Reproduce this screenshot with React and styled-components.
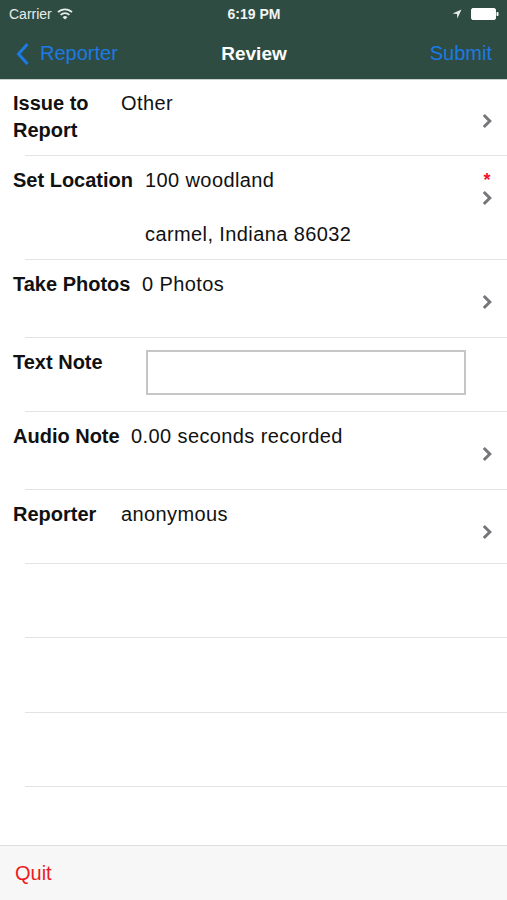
import React from 'react'
import styled, { createGlobalStyle } from 'styled-components'

const GlobalStyle = createGlobalStyle`
  html, body {
    margin: 0;
    padding: 0;
    background: #fff;
    font-family: "Liberation Sans", Arial, sans-serif;
  }
`

const rows = [
  { label: 'Issue to\nReport', value: ['Other'], labelWidth: 97, height: 76, chevron: true },
  { label: 'Set Location', value: ['100 woodland', 'carmel, Indiana 86032'], labelWidth: 121, height: 104, chevron: true, required: true },
  { label: 'Take Photos', value: ['0 Photos'], labelWidth: 118, height: 78, chevron: true },
  { label: 'Text Note', input: true, labelWidth: 122, height: 74 },
  { label: 'Audio Note', value: ['0.00 seconds recorded'], labelWidth: 107, height: 78, chevron: true },
  { label: 'Reporter', value: ['anonymous'], labelWidth: 97, height: 74, chevron: true },
]

const Chevron = () => (
  <svg width="12" height="16" viewBox="0 0 12 16">
    <path d="M2.8 2 L8.8 8 L2.8 14" fill="none" stroke="#76767a" strokeWidth="3" />
  </svg>
)

const BackChevron = () => (
  <svg width="14" height="24" viewBox="0 0 14 24">
    <path d="M11.5 2 L2.5 12 L11.5 22" fill="none" stroke="#1c7ae2" strokeWidth="3" />
  </svg>
)

const Wifi = () => (
  <svg width="16" height="12" viewBox="0 0 16 12">
    <path d="M1 4.2 A10 10 0 0 1 15 4.2" fill="none" stroke="#e6ece9" strokeWidth="1.8" />
    <path d="M3.6 6.8 A6.4 6.4 0 0 1 12.4 6.8" fill="none" stroke="#e6ece9" strokeWidth="1.8" />
    <path d="M8 11.5 L5.6 9.2 A3.4 3.4 0 0 1 10.4 9.2 Z" fill="#e6ece9" />
  </svg>
)

const LocationArrow = () => (
  <svg width="10" height="10" viewBox="0 0 10 10">
    <path d="M9.5 0.5 L0.5 4.6 L5 5 L5.4 9.5 Z" fill="#e6ece9" />
  </svg>
)

const Battery = () => (
  <svg width="28" height="12" viewBox="0 0 28 12">
    <rect x="0.5" y="0.5" width="24" height="11" rx="1.5" fill="#fff" stroke="#fff" />
    <rect x="25.5" y="4" width="2" height="4" rx="0.8" fill="#fff" />
  </svg>
)

export default function App() {
  return (
    <>
      <GlobalStyle />
      <Screen>
        <Header>
          <StatusBar>
            <Carrier>
              Carrier <Wifi />
            </Carrier>
            <Clock>6:19 PM</Clock>
            <StatusRight>
              <LocationArrow />
              <Battery />
            </StatusRight>
          </StatusBar>
          <NavBar>
            <NavButton>
              <BackChevron />
              Reporter
            </NavButton>
            <NavTitle>Review</NavTitle>
            <NavButton $right>Submit</NavButton>
          </NavBar>
        </Header>

        <List>
          {rows.map(row => (
            <Row key={row.label} $height={row.height}>
              <Label $width={row.labelWidth}>{row.label}</Label>
              {row.input ? (
                <NoteInput />
              ) : (
                <Value>
                  {row.value.map(line => (
                    <div key={line}>{line}</div>
                  ))}
                </Value>
              )}
              <Accessory>
                {row.required && <Required>*</Required>}
                {row.chevron && (
                  <ChevronSlot>
                    <Chevron />
                  </ChevronSlot>
                )}
              </Accessory>
            </Row>
          ))}
          <Row $height={74} />
          <Row $height={75} />
          <Row $height={74} />
        </List>

        <Toolbar>
          <QuitButton>Quit</QuitButton>
        </Toolbar>
      </Screen>
    </>
  )
}

const Screen = styled.div`
  width: 507px;
  height: 900px;
  display: flex;
  flex-direction: column;
  background: #fff;
  overflow: hidden;
`

const Header = styled.div`
  background: #2e4c42;
  height: 79px;
  border-bottom: 1px solid #c9cfcc;
  display: flex;
  flex-direction: column;
`

const StatusBar = styled.div`
  height: 27px;
  display: grid;
  grid-template-columns: 1fr auto 1fr;
  align-items: center;
  padding: 0 8px 0 9px;
  font-size: 14px;
  color: #e6ece9;
`

const Carrier = styled.div`
  display: flex;
  align-items: center;
  gap: 5px;
`

const Clock = styled.div`
  font-weight: bold;
  color: #f2f4f3;
`

const StatusRight = styled.div`
  display: flex;
  align-items: center;
  justify-content: flex-end;
  gap: 9px;
`

const NavBar = styled.div`
  flex: 1;
  display: grid;
  grid-template-columns: 1fr auto 1fr;
  align-items: center;
  padding: 1px 15px 0 16px;
`

const NavButton = styled.div`
  display: flex;
  align-items: center;
  justify-content: ${p => (p.$right ? 'flex-end' : 'flex-start')};
  gap: 10px;
  font-size: 20px;
  color: #1c7ae2;
`

const NavTitle = styled.div`
  font-size: 19px;
  font-weight: bold;
  color: #fff;
`

const List = styled.div`
  flex: 1;
  display: flex;
  flex-direction: column;
`

const Row = styled.div`
  height: ${p => p.$height}px;
  flex: 0 0 auto;
  box-sizing: border-box;
  display: flex;
  align-items: flex-start;
  gap: 11px;
  padding: 11px 14px 0 13px;
  background: linear-gradient(#e3e3e3, #e3e3e3) no-repeat 25px 100% / calc(100% - 25px) 1px;
  font-size: 20px;
  line-height: 27px;
  color: #111;

  &:first-child {
    padding-top: 10px;
  }
`

const Label = styled.div`
  flex: 0 0 ${p => p.$width}px;
  font-weight: bold;
  white-space: pre;
`

const Value = styled.div`
  flex: 1;
  display: flex;
  flex-direction: column;
  gap: 27px;
  letter-spacing: 0.4px;
  white-space: nowrap;
`

const NoteInput = styled.div`
  flex: 0 0 320px;
  height: 45px;
  margin-top: 1px;
  box-sizing: border-box;
  border: 2px solid #c6c6c6;
  background: #fff;
`

const Accessory = styled.div`
  margin-left: auto;
  width: 12px;
  height: 39px;
  display: flex;
  flex-direction: column;
  justify-content: flex-end;
  align-items: center;
`

const Required = styled.div`
  color: #f0142a;
  font-size: 18px;
  font-weight: bold;
  line-height: 14px;
  height: 14px;
  margin-top: 3px;
`

const ChevronSlot = styled.div`
  margin-top: 3px;
  display: flex;
`

const Toolbar = styled.div`
  height: 54px;
  margin-top: auto;
  background: #f7f7f7;
  border-top: 1px solid #dedede;
  display: flex;
  align-items: center;
  padding: 0 15px;
`

const QuitButton = styled.div`
  font-size: 20px;
  color: #ec1a1e;
`
